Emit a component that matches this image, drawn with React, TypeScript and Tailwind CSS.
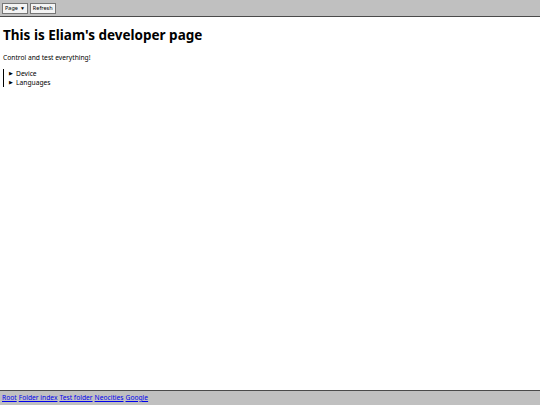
import React from 'react';

const links = ['Root', 'Folder index', 'Test folder', 'Neocities', 'Google'];

const App = () => {
  return (
    <div className="h-[405px] w-[540px] flex flex-col bg-white text-black font-['Noto_Sans',sans-serif] overflow-hidden">
      <div className="h-[17px] shrink-0 bg-[#c0c0c0] border-b-[1.5px] border-[#4a4a4a] flex items-start gap-[2px] px-[2px] pt-[3px]">
        <button className="h-[11px] px-[2px] bg-[#f4f4f4] border border-[#767676] text-[5.5px] leading-none flex items-center gap-[2px]">
          Page <span className="text-[5px]">▼</span>
        </button>
        <button className="h-[11px] px-[2px] bg-[#f4f4f4] border border-[#767676] text-[5.5px] leading-none">
          Refresh
        </button>
      </div>

      <main className="flex-1 px-[3px] text-[6.7px]">
        <h1 className="text-[13.5px] font-bold leading-none mt-[12px]">This is Eliam's developer page</h1>
        <p className="mt-[10px]">Control and test everything!</p>
        <div className="mt-[6px] border-l border-black pl-[5px] flex flex-col">
          <div className="flex items-center gap-[3px] leading-[9px]"><span className="text-[5px]">▶</span>Device</div>
          <div className="flex items-center gap-[3px] leading-[9px]"><span className="text-[5px]">▶</span>Languages</div>
        </div>
      </main>

      <footer className="h-[15px] shrink-0 bg-[#c0c0c0] border-t border-[#4a4a4a] flex items-center gap-[2px] px-[2px] text-[6.7px]">
        {links.map((l) => (
          <a key={l} href="#" className="text-[#0000ee] underline">{l}</a>
        ))}
      </footer>
    </div>
  );
};

export default App;
